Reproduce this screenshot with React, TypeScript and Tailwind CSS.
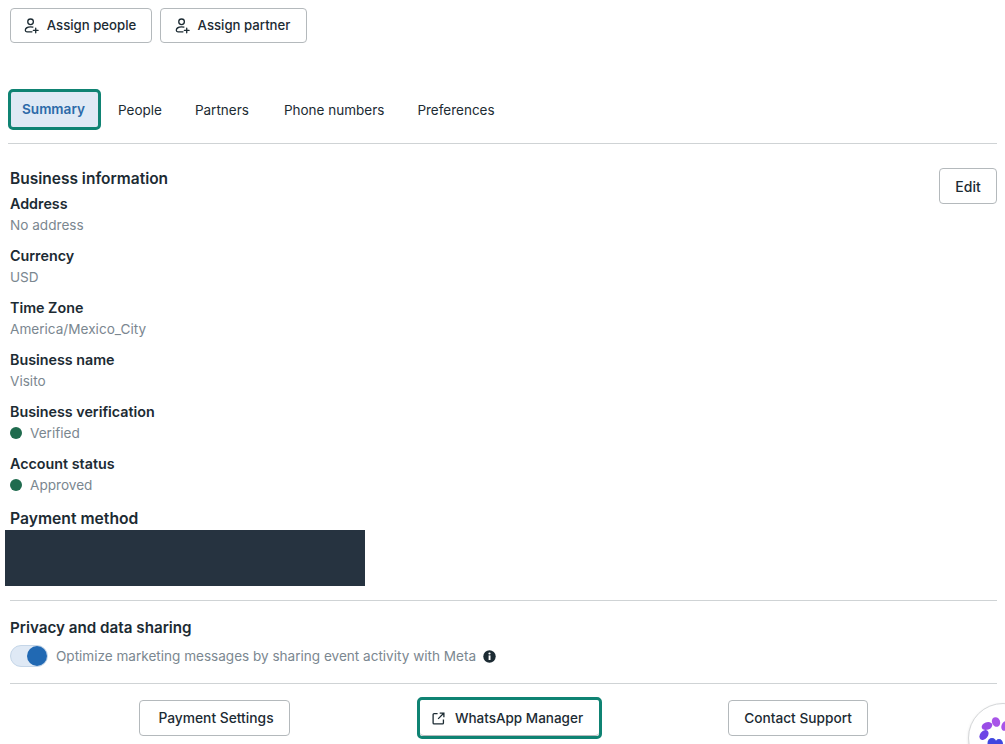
import type { ReactNode } from 'react';

const font = { fontFamily: 'Inter, "Noto Sans", sans-serif' };

function AddPersonIcon() {
  return (
    <svg width="15" height="16" viewBox="0 0 16 17" fill="none" stroke="#1c2b33" strokeWidth="1.4" strokeLinecap="round">
      <circle cx="7" cy="4" r="3" />
      <path d="M9.5 9.7C8.8 9.5 8 9.4 7 9.4c-3.4 0-5.6 1.6-5.6 3.7 0 1 .7 1.6 1.7 1.6h5.4" />
      <path d="M12.5 10.7v5M10 13.2h5" />
    </svg>
  );
}

function OutlineButton({ children, className }: { children: ReactNode; className: string }) {
  return (
    <button className={`flex items-center justify-center rounded-[4px] border border-[#b4b9bc] bg-white font-medium text-[#1c2b33] ${className}`}>
      {children}
    </button>
  );
}

function Field({ label, value, dot }: { label: string; value: string; dot?: boolean }) {
  return (
    <div className="h-[52px] pt-[3px]">
      <div className="h-[20px] text-[14.3px] leading-[20px] font-semibold text-[#1c2b33]">{label}</div>
      <div className="flex h-[21px] items-center pt-[1px] text-[13.6px] text-[#7b8790]">
        {dot && <span className="mr-[8px] h-[12px] w-[12px] rounded-full bg-[#1f6b4e]" />}
        {value}
      </div>
    </div>
  );
}

export default function App() {
  return (
    <div className="relative h-[744px] w-[1005px] overflow-hidden bg-white" style={font}>
      <div className="flex gap-2 pt-2 pl-[10px]">
        <OutlineButton className="h-[35px] w-[142px] gap-[8px] pr-[2px] text-[13.2px]">
          <AddPersonIcon />
          Assign people
        </OutlineButton>
        <OutlineButton className="h-[35px] w-[147px] gap-[8px] pr-[2px] text-[13.2px]">
          <AddPersonIcon />
          Assign partner
        </OutlineButton>
      </div>

      <div className="mt-[46px] ml-[8px] flex h-[42px] items-center text-[13.5px] text-[#1c2b33]">
        <div className="flex h-[41px] w-[93px] items-center justify-center self-start rounded-[5px] border-[3px] border-[#0f8373] bg-[#dfe9f5] pr-[2px] text-[13.6px] font-semibold text-[#2c6aa8]">
          Summary
        </div>
        <span className="ml-[17px]">People</span>
        <span className="ml-[33px]">Partners</span>
        <span className="ml-[35px]">Phone numbers</span>
        <span className="ml-[33px]">Preferences</span>
      </div>

      <div className="mx-[8px] mt-[12px] h-px bg-[#cfd3d5]" />

      <div className="flex justify-between pr-[8px] pl-[10px]">
        <div className="pt-[24px]">
          <div className="h-[23px] text-[15.5px] leading-[22px] font-semibold text-[#1c2b33]">Business information</div>
          <Field label="Address" value="No address" />
          <Field label="Currency" value="USD" />
          <Field label="Time Zone" value="America/Mexico_City" />
          <Field label="Business name" value="Visito" />
          <Field label="Business verification" value="Verified" dot />
          <Field label="Account status" value="Approved" dot />
          <div className="h-[27px] pt-[4px] text-[15.7px] leading-[24px] font-semibold text-[#1c2b33]">Payment method</div>
        </div>
        <OutlineButton className="mt-[24px] h-[36px] w-[58px] text-[14px]">Edit</OutlineButton>
      </div>

      <div className="ml-[5px] h-[56px] w-[360px] bg-[#263340]" />

      <div className="mt-[14px] mr-[8px] ml-[10px] h-px bg-[#cfd3d5]" />

      <div className="px-[10px] pt-[16px]">
        <div className="h-[22px] text-[15.2px] leading-[22px] font-semibold text-[#1c2b33]">Privacy and data sharing</div>
        <div className="mt-[5px] flex h-[24px] items-center text-[13.55px] text-[#7b8790]">
          <div className="flex h-[22px] w-[38px] items-center justify-end rounded-full border border-[#c5d6e8] bg-[#dfe9f5]">
            <span className="h-[20px] w-[20px] rounded-full bg-[#2169b3]" />
          </div>
          <span className="ml-[8px]">Optimize marketing messages by sharing event activity with Meta</span>
          <svg className="ml-[7px]" width="13" height="13" viewBox="0 0 13 13">
            <circle cx="6.5" cy="6.5" r="6.2" fill="#1c2b33" />
            <rect x="5.6" y="5.4" width="1.9" height="4.6" fill="#fff" />
            <circle cx="6.5" cy="3.5" r="1.1" fill="#fff" />
          </svg>
        </div>
      </div>

      <div className="mt-[15px] mr-[8px] ml-[10px] h-px bg-[#cfd3d5]" />

      <div className="relative mt-[13px] flex h-[42px] items-center pl-[139px]">
        <OutlineButton className="h-[36px] w-[151px] pt-[1px] pl-[3px] text-[13.8px]">Payment Settings</OutlineButton>
        <div className="ml-[127px] rounded-[5px] border-[3px] border-[#0f8373]">
          <OutlineButton className="h-[36px] w-[179px] gap-[10px] border-0 border-b pt-[1px] pr-[4px] text-[13.5px]">
            <svg width="13" height="13" viewBox="0 0 14 14" fill="none" stroke="#1c2b33" strokeWidth="1.4">
              <path d="M6 1.7H2.2a1 1 0 0 0-1 1v9.1a1 1 0 0 0 1 1h9.1a1 1 0 0 0 1-1V8" />
              <path d="M8.3 1.2h4.5v4.5M12.6 1.4 6.6 7.4" />
            </svg>
            WhatsApp Manager
          </OutlineButton>
        </div>
        <OutlineButton className="ml-[126px] h-[36px] w-[140px] pt-[1px] text-[13.7px]">Contact Support</OutlineButton>
      </div>

      <div className="absolute top-[703px] left-[968px] h-[70px] w-[70px] rounded-full border border-[#d5d7d9] bg-white shadow-sm">
        <svg className="absolute top-[10px] left-[8px]" width="50" height="50" viewBox="0 0 50 50">
          <ellipse cx="19" cy="8" rx="4" ry="5" transform="rotate(-25 19 8)" fill="#a855e8" />
          <ellipse cx="10" cy="12" rx="5.5" ry="3.8" transform="rotate(-20 10 12)" fill="#9a4de6" />
          <ellipse cx="7" cy="21" rx="5.5" ry="3.8" transform="rotate(-50 7 21)" fill="#6d45e6" />
          <ellipse cx="15" cy="29" rx="4.5" ry="5" fill="#3f47e0" />
          <ellipse cx="22" cy="30" rx="4" ry="5" fill="#3f47e0" />
          <ellipse cx="28" cy="12" rx="3.5" ry="5" transform="rotate(20 28 12)" fill="#a855e8" />
        </svg>
      </div>
    </div>
  );
}
